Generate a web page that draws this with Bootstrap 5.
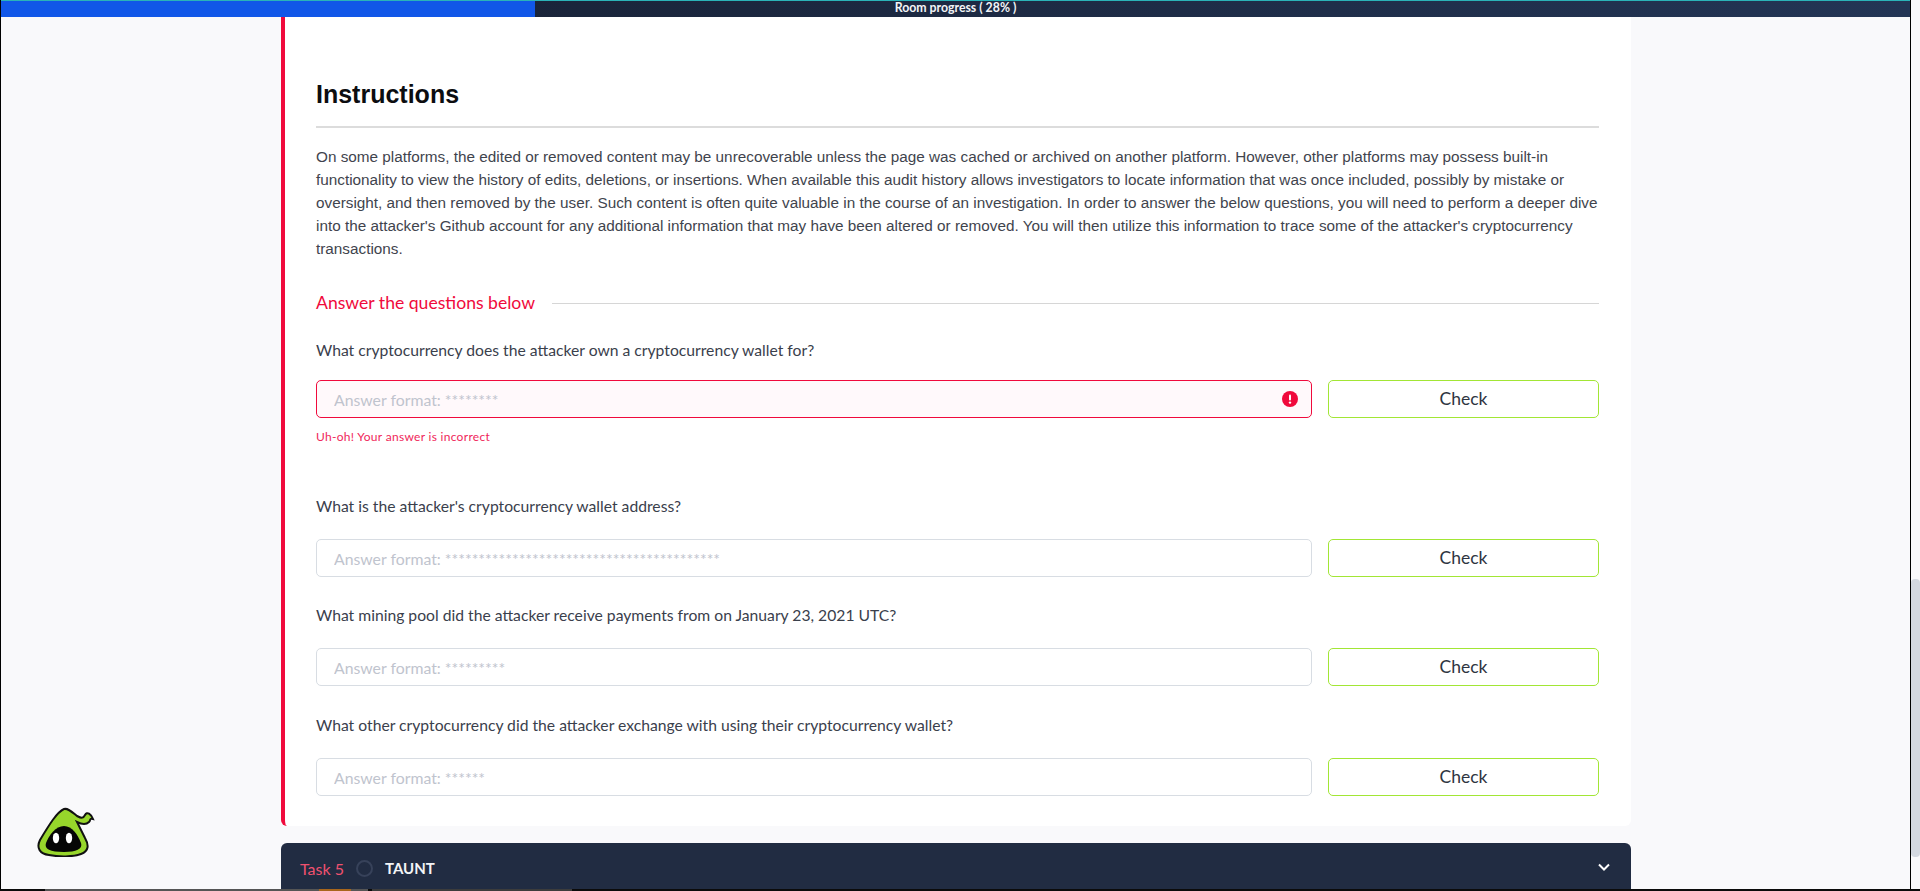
<!DOCTYPE html>
<html lang="en">
<head>
<meta charset="utf-8">
<title>Room</title>
<link href="https://cdn.jsdelivr.net/npm/bootstrap@5.3.0/dist/css/bootstrap.min.css" rel="stylesheet">
<style>
html,body{height:891px;overflow:hidden;background:#000;}
body{font-family:Lato,"Noto Sans",sans-serif;color:#2f3541;}
.screen-wrap{width:1909px;height:889px;margin-left:1px;background:#f9f9fb;overflow:hidden;}
.side-rail{width:10px;height:889px;background:#f9f9fb;border-left:1px solid #000;}
.rail-track{height:579px;}
.rail-thumb{height:278px;background:#d3d8e0;border-radius:4px;}
.prog-bar{height:17px;background:linear-gradient(90deg,#161e30,#233555);border-top:1px solid #2bb3b8;}
.prog-fill{width:534px;background:#1157e8;}
.prog-label{left:0;right:0;top:0;font-weight:700;color:#f2f4f7;font-size:12.3px;line-height:13px;}
.page-col{width:1350px;margin-left:280px;}
.task-body{height:809px;background:#fff;border-left:4px solid #f00a3c;border-radius:0 0 6px 6px;padding:61px 32px 0 31px;}
.instr-title{font-family:"Liberation Sans",Arial,sans-serif;font-weight:700;font-size:25px;line-height:32px;color:#0c0d10;margin:0;}
.instr-rule{height:2px;background:#dcdcdc;margin:16px 0 0;}
.instr-text{font-family:"Liberation Sans",Arial,sans-serif;font-size:15.3px;line-height:23px;color:#3f444d;margin:17px 0 0;}
.ans-head{margin-top:31px;height:24px;color:#f00a3c;font-size:17.6px;line-height:24px;}
.ans-head::after{content:"";flex:1;height:1px;background:#d6d6d6;margin-left:17px;}
.q-label{font-size:15.7px;line-height:22px;color:#3a404c;margin:0 0 22px;}
.q-row{height:38px;gap:16px;}
.q-field{flex:1;height:38px;font-size:15.8px;border:1px solid #d8dde3;border-radius:5px;color:#bfc4ce;padding:0 17px;font-family:inherit;}
.q-field::placeholder{color:#bfc4ce;opacity:1;}
.field-bad{background:#fff9fb;border-color:#f00a3c;}
.field-icon{right:14px;top:11px;}
.q-btn{width:271px;height:38px;background:#fff;border:1px solid #a2e635;border-radius:5px;color:#2f3541;font-size:17.5px;line-height:34px;padding:0;}
.q-err{font-size:12px;line-height:14px;color:#f0265a;margin-top:12px;letter-spacing:.3px;}
.q-one{margin-top:24px;}
.q-one .q-label{margin-bottom:19px;}
.q-two{margin-top:51px;}
.q-three{margin-top:27px;}
.q-four{margin-top:28px;}
.task-bar{height:46px;margin-top:17px;background:#212c42;border-radius:6px 6px 0 0;padding:5px 20px 0 19px;color:#fff;}
.task-num{color:#f0516f;font-size:16px;}
.task-dot{width:17px;height:17px;border:2px solid #37425a;border-radius:50%;margin:0 12px 0 12px;}
.task-name{font-size:15px;font-weight:700;color:#f3f4f6;}
.task-chev{margin-bottom:3px;}
.mascot{left:36px;top:807px;}
.foot-line{left:0;right:0;bottom:0;height:2px;background:#0b0b0b;}
.foot-seg-a{width:323px;margin-left:45px;background:#555;}
.foot-seg-b{width:200px;margin-left:4px;background:#3c3c3c;}
.foot-glow{width:32px;height:2px;margin-left:274px;background:#a8661c;}
</style>
</head>
<body>
<div class="d-flex">
<div class="screen-wrap position-relative">
  <div class="prog-bar d-flex position-relative">
    <div class="prog-fill"></div>
    <div class="prog-label position-absolute text-center">Room progress ( 28% )</div>
  </div>
  <div class="page-col">
    <div class="task-body">
      <h2 class="instr-title">Instructions</h2>
      <div class="instr-rule"></div>
      <p class="instr-text">On some platforms, the edited or removed content may be unrecoverable unless the page was cached or archived on another platform. However, other platforms may possess built-in functionality to view the history of edits, deletions, or insertions. When available this audit history allows investigators to locate information that was once included, possibly by mistake or oversight, and then removed by the user. Such content is often quite valuable in the course of an investigation. In order to answer the below questions, you will need to perform a deeper dive into the attacker's Github account for any additional information that may have been altered or removed. You will then utilize this information to trace some of the attacker's cryptocurrency transactions.</p>
      <div class="ans-head d-flex align-items-center">Answer the questions below</div>
      <div class="q-one">
        <p class="q-label">What cryptocurrency does the attacker own a cryptocurrency wallet for?</p>
        <div class="q-row d-flex">
          <div class="flex-grow-1 d-flex position-relative">
            <input class="q-field field-bad" type="text" placeholder="Answer format: ********">
            <svg class="field-icon position-absolute" width="16" height="16" viewBox="0 0 16 16"><circle cx="8" cy="8" r="8" fill="#f00a3c"/><rect x="7" y="3.5" width="2" height="6" rx="1" fill="#fff"/><circle cx="8" cy="11.6" r="1.2" fill="#fff"/></svg>
          </div>
          <button class="q-btn" type="button">Check</button>
        </div>
        <div class="q-err">Uh-oh! Your answer is incorrect</div>
      </div>
      <div class="q-two">
        <p class="q-label">What is the attacker's cryptocurrency wallet address?</p>
        <div class="q-row d-flex">
          <input class="q-field" type="text" placeholder="Answer format: *****************************************">
          <button class="q-btn" type="button">Check</button>
        </div>
      </div>
      <div class="q-three">
        <p class="q-label">What mining pool did the attacker receive payments from on January 23, 2021 UTC?</p>
        <div class="q-row d-flex">
          <input class="q-field" type="text" placeholder="Answer format: *********">
          <button class="q-btn" type="button">Check</button>
        </div>
      </div>
      <div class="q-four">
        <p class="q-label">What other cryptocurrency did the attacker exchange with using their cryptocurrency wallet?</p>
        <div class="q-row d-flex">
          <input class="q-field" type="text" placeholder="Answer format: ******">
          <button class="q-btn" type="button">Check</button>
        </div>
      </div>
    </div>
    <div class="task-bar d-flex align-items-center">
      <span class="task-num">Task 5</span>
      <span class="task-dot"></span>
      <span class="task-name">TAUNT</span>
      <svg class="task-chev ms-auto" width="14" height="14" viewBox="0 0 14 14" fill="none" stroke="#fff" stroke-width="2"><path d="M2 4.5l5 5 5-5"/></svg>
    </div>
  </div>
  <svg class="mascot position-absolute" width="60" height="50" viewBox="0 0 60 50">
    <path d="M27 2C20 5 12 18 3 33C-1 41 3 47 12 48C22 50 36 50 44 47C52 44 52 38 48 31C45 25 42 19 40 15C44 17 49 18 52 15C54 13 52 11 56 12C54 7 50 4 48 8C46 12 44 11 40 9C35 5 31 1 27 2Z" fill="#97d62b" stroke="#111" stroke-width="2"/>
    <path d="M27 19C19 19 12 28 9 36C7 42 13 45 27 45C39 45 46 42 44 36C41 28 35 19 27 19Z" fill="#060606"/>
    <ellipse cx="19" cy="31" rx="3.2" ry="5.2" fill="#fff"/><ellipse cx="32" cy="31" rx="3.2" ry="5.2" fill="#fff"/>
  </svg>
</div>
<div class="side-rail"><div class="rail-track"></div><div class="rail-thumb"></div></div>
</div>
<div class="foot-line position-absolute d-flex">
  <div class="foot-seg-a"><div class="foot-glow"></div></div>
  <div class="foot-seg-b"></div>
</div>
<script src="https://cdn.jsdelivr.net/npm/bootstrap@5.3.0/dist/js/bootstrap.bundle.min.js"></script>
</body>
</html>
